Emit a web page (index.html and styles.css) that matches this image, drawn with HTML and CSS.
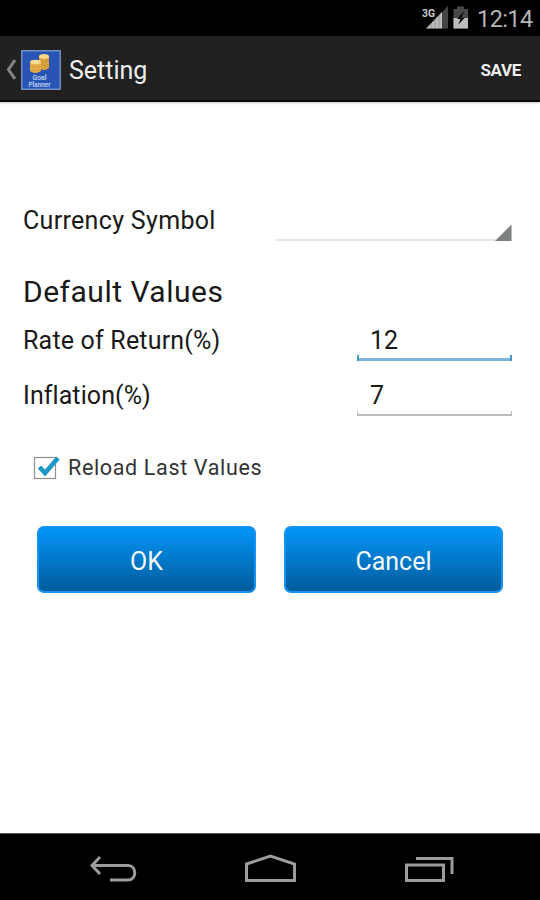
FILE: index.html
```
<!DOCTYPE html>
<html lang="en">
<head>
<meta charset="utf-8">
<title>Setting</title>
<link rel="stylesheet" href="styles.css">
</head>
<body>
<div class="screen">
  <div class="status-bar">
    <svg class="status-icons" width="50" height="36" viewBox="0 0 50 36">
      <path d="M27 6V28.500H5z" fill="#444"/>
      <path d="M21 12V28.500H5z" fill="#bbb"/>
      <path d="M10 22V29M14 18V29M18 14V29" stroke="#000" stroke-opacity=".2"/>
      <text class="network" x="1" y="16.500" textLength="13" lengthAdjust="spacingAndGlyphs">3G</text>
      <path d="M32.500 9H36V6.500H43V9H47V28.500H32.500z" fill="#484848"/>
      <path d="M32.500 18H47V28.500H32.500z" fill="#bdbdbd"/>
      <path d="M43 11L36 19H39.500L37 25L44 17.500H40.500z" fill="#080808"/>
    </svg>
    <span class="clock">12:14</span>
  </div>
  <header class="action-bar">
    <svg class="up" width="13" height="26" viewBox="0 0 13 26"><path d="M12 3L5.500 12.500L12 22" fill="none" stroke="#858585" stroke-width="3"/></svg>
    <svg class="app-icon" width="40" height="40" viewBox="0 0 40 40">
      <rect x=".75" y=".75" width="38.500" height="38.500" fill="#2855b5" stroke="#829bc9" stroke-width="1.300"/>
      <path d="M18 6Q23 2 28 6V18Q23 22 18 18z" fill="#dda13c"/>
      <path d="M9 12Q14 8 20 12V21Q14 25 9 21z" fill="#e8b04a"/>
      <ellipse cx="23" cy="6.500" rx="5" ry="2.200" fill="#f7d98b"/>
      <ellipse cx="14.500" cy="12" rx="5.300" ry="2.200" fill="#f9dc94"/>
      <path d="M9 16Q14 19 20 16M9 19Q14 22 20 19M20 11Q24 13 28 10M20 15Q24 17 28 14" fill="none" stroke="#c28c35" stroke-width=".6"/>
      <text class="icon-text" x="18.500" y="29.500" textLength="14" lengthAdjust="spacingAndGlyphs">Goal</text>
      <text class="icon-text" x="18.500" y="36.500" textLength="22" lengthAdjust="spacingAndGlyphs">Planner</text>
    </svg>
    <h1 class="title">Setting</h1>
    <span class="save">SAVE</span>
  </header>
  <main class="content">
    <div class="row currency">
      <span class="label label-currency">Currency Symbol</span>
      <div class="spinner"><svg width="17" height="17" viewBox="0 0 17 17"><path d="M16.500 .5V17H0z" fill="#7c807e"/></svg></div>
    </div>
    <h2 class="heading">Default Values</h2>
    <div class="row rate">
      <span class="label label-rate">Rate of Return(%)</span>
      <div class="field focused"><span>12</span></div>
    </div>
    <div class="row inflation">
      <span class="label label-inflation">Inflation(%)</span>
      <div class="field"><span>7</span></div>
    </div>
    <div class="check">
      <svg width="30" height="30" viewBox="0 0 30 30">
        <rect x="2.500" y="4.500" width="21" height="21" fill="#fff" stroke="#8d8d8d" stroke-width="1.200"/>
        <path d="M7.500 14L13 20L26 5" fill="none" stroke="#1f97c8" stroke-width="4.600"/>
      </svg>
      <span class="check-label">Reload Last Values</span>
    </div>
    <div class="buttons">
      <div class="button ok">OK</div>
      <div class="button cancel">Cancel</div>
    </div>
  </main>
  <nav class="nav-bar">
    <svg width="540" height="66" viewBox="0 0 540 66" fill="none" stroke="#9c9c9c" stroke-width="3">
      <path d="M100 23L92 31.500L100 40M92 31.500H128C137 31.500 137 46 128 46H110"/>
      <path d="M246.500 30L270.500 22L294.500 30V46.500H246.500z"/>
      <path d="M406.500 31H443.500V46.500H406.500zM416 24.500H452V40"/>
    </svg>
  </nav>
</div>
</body>
</html>
```
FILE: styles.css
```
* { box-sizing: border-box; }
body { margin: 0; background: #fff; font-family: Roboto, "Liberation Sans", sans-serif; color: #191919; }
.screen { width: 540px; height: 900px; display: flex; flex-direction: column; overflow: hidden; }
.status-bar { height: 36px; background: #000; display: flex; align-items: center; justify-content: flex-end; padding-right: 8px; }
.status-icons { display: block; margin-right: 6px; }
.network { font-size: 11px; font-weight: 700; fill: #ccc; }
.clock { font-size: 23.500px; line-height: 36px; padding-top: 1px; color: #b4b4b4; letter-spacing: -.6px; margin-right: -.6px; }
.action-bar { height: 66px; background: #212121; border-bottom: 2px solid #0a0a0a; box-shadow: 0 1px 2px #8888; display: flex; align-items: center; padding: 3px 19px 0 3px; }
.up { display: block; margin-right: 5px; }
.app-icon { display: block; }
.icon-text { font-size: 6.500px; font-weight: 500; fill: #c8d5f4; text-anchor: middle; }
.title { margin: 0 auto 0 8px; font-size: 25px; line-height: 30px; font-weight: 400; color: #eee; padding-top: 2px; }
.save { font-size: 17px; line-height: 30px; font-weight: 700; color: #eee; letter-spacing: -.35px; }
.content { height: 731px; padding: 97px 28px 0 23px; }
.row { display: flex; justify-content: space-between; }
.label { font-size: 25px; line-height: 42px; white-space: nowrap; }
.currency { height: 43px; }
.label-currency { line-height: 44px; letter-spacing: .32px; }
.label-rate { letter-spacing: .19px; }
.label-inflation { letter-spacing: .08px; }
.spinner { width: 236px; height: 42px; border-bottom: 2px solid #e7e7e7; display: flex; justify-content: flex-end; align-items: flex-end; }
.spinner svg { display: block; margin-bottom: -2px; }
.heading { margin: 30px 0 0; font-size: 30px; line-height: 40px; font-weight: 400; letter-spacing: .5px; }
.rate { margin-top: 8px; height: 42px; }
.inflation { margin-top: 13px; height: 42px; }
.field { width: 155px; height: 41px; padding-left: 13px; font-size: 25px; line-height: 42px; background: linear-gradient(#bbb, #bbb) left bottom / 1px 5px no-repeat, linear-gradient(#bbb, #bbb) right bottom / 1px 5px no-repeat, linear-gradient(#bbb, #bbb) left bottom / 100% 2px no-repeat; }
.focused { background: linear-gradient(#3d9bd0, #3d9bd0) left bottom / 2px 6px no-repeat, linear-gradient(#3d9bd0, #3d9bd0) right bottom / 2px 6px no-repeat, linear-gradient(#7eb4da, #7eb4da) left bottom / 100% 3px no-repeat; }
.check { margin-top: 33px; height: 35px; display: flex; align-items: center; padding-left: 9px; }
.check-label { margin-left: 6px; font-size: 21.500px; line-height: 30px; color: #333; white-space: nowrap; letter-spacing: .65px; }
.buttons { display: flex; gap: 28px; margin: 41px 0 0 14px; }
.button { width: 219px; height: 67px; border: 2px solid #1593f5; border-radius: 7px; background: linear-gradient(#0495f8, #005c9c); color: #f3f8fc; font-size: 25px; line-height: 67px; text-align: center; }
.nav-bar { height: 67px; background: #000; border-top: 1px solid #555; }
.nav-bar svg { display: block; }
```
